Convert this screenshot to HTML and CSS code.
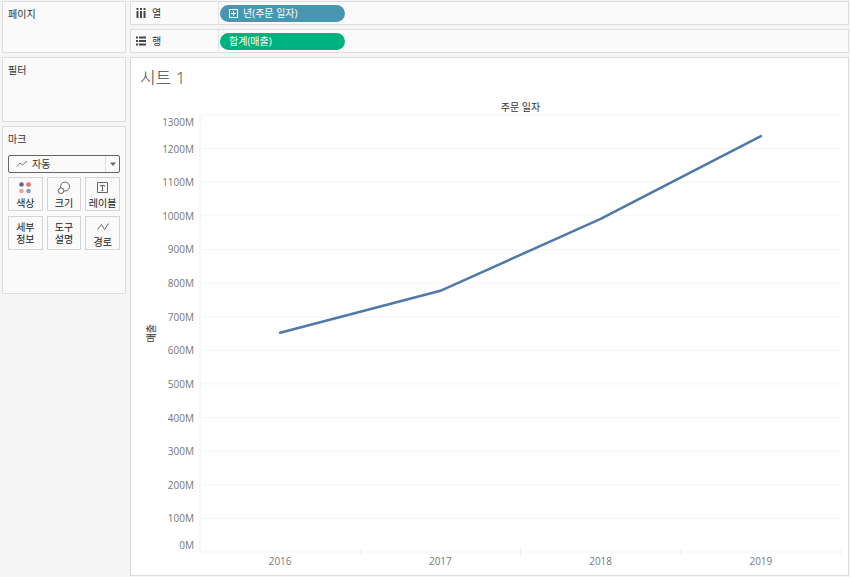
FILE: index.html
```html
<!DOCTYPE html>
<html lang="ko">
<head>
  <meta charset="UTF-8">
  <meta name="viewport" content="width=device-width, initial-scale=1.0">
  <title>시트 1</title>
  <link rel="stylesheet" href="styles.css">
</head>
<body>
  <div class="workspace">
    <!-- 왼쪽 카드 영역 -->
    <aside class="sidebar">
      <section class="card pages">
        <h2>페이지</h2>
      </section>
      <section class="card filters">
        <h2>필터</h2>
      </section>
      <section class="card marks">
        <h2><label for="mark-type">마크</label></h2>
        <div class="mark-type">
          <select id="mark-type">
            <option>자동</option>
          </select>
          <svg class="type-icon" width="12" height="8" viewBox="0 0 12 8"><path d="M1 6.500L4 3l2.500 2L11 1"/></svg>
          <svg class="arrow" width="15" height="16" viewBox="0 0 15 16"><path class="split" d="M.5 0v16"/><path class="tip" d="M5 6.500h6L8 10z"/></svg>
        </div>
        <div class="mark-buttons">
          <button type="button">
            <svg width="14" height="14" viewBox="0 0 14 14">
              <circle cx="3.500" cy="3.500" r="2.300" fill="#6b6287"/>
              <circle cx="10.500" cy="3.500" r="2.300" fill="#ed6b70"/>
              <circle cx="3.500" cy="10" r="2.300" fill="#f7a08c"/>
              <circle cx="10.500" cy="10" r="2.300" fill="#7d9fc8"/>
            </svg>
            색상
          </button>
          <button type="button">
            <svg class="line-icon" width="14" height="14" viewBox="0 0 14 14">
              <path d="M3.700 6.700A4.500 4.500 0 1 1 6.600 9.800"/>
              <circle cx="4" cy="9.700" r="2.800"/>
            </svg>
            크기
          </button>
          <button type="button">
            <svg class="line-icon" width="14" height="14" viewBox="0 0 14 14">
              <path d="M1.500 1.500h10v10h-10z"/>
              <path d="M4.500 5.500v-1h4v1M6.500 4.500v5M5.500 9.500h2"/>
            </svg>
            레이블
          </button>
          <button type="button">세부<br>정보</button>
          <button type="button">도구<br>설명</button>
          <button type="button">
            <svg class="line-icon" width="14" height="14" viewBox="0 0 14 14"><path d="M1.500 9.500L5.500 4.500l3 5L12.500 3.500"/></svg>
            경로
          </button>
        </div>
      </section>
    </aside>

    <main class="content">
      <!-- 열 / 행 선반 -->
      <div class="card shelf">
        <div class="shelf-name">
          <svg width="10" height="10" viewBox="0 0 10 10"><path d="M1.500 0v2M5 0v2M8.500 0v2M1.500 3v7M5 3v7M8.500 3v7"/></svg>
          열
        </div>
        <div class="pill dimension">
          <svg width="9" height="9" viewBox="0 0 9 9"><path d="M.5 .5h8v8h-8zM2 4.500h5M4.500 2v5"/></svg>
          년(주문 일자)
        </div>
      </div>
      <div class="card shelf">
        <div class="shelf-name">
          <svg width="10" height="10" viewBox="0 0 10 10"><path d="M0 1.500h2M0 5h2M0 8.500h2M3 1.500h7M3 5h7M3 8.500h7"/></svg>
          행
        </div>
        <div class="pill measure">합계(매출)</div>
      </div>

      <!-- 시트 -->
      <section class="card sheet">
        <h1>시트 1</h1>
        <div class="chart">
          <div class="x-title">주문 일자</div>
          <div class="y-title">매출</div>
          <div class="y-axis">
            <span>1300M</span>
            <span>1200M</span>
            <span>1100M</span>
            <span>1000M</span>
            <span>900M</span>
            <span>800M</span>
            <span>700M</span>
            <span>600M</span>
            <span>500M</span>
            <span>400M</span>
            <span>300M</span>
            <span>200M</span>
            <span>100M</span>
            <span>0M</span>
          </div>
          <!-- y: 0 = 1300M, 1300 = 0M -->
          <svg class="plot" viewBox="0 0 640 1300" preserveAspectRatio="none">
            <path class="grid" d="M0 0H640M0 100H640M0 200H640M0 300H640M0 400H640M0 500H640M0 600H640M0 700H640M0 800H640M0 900H640M0 1000H640M0 1100H640M0 1200H640M0 1300H640"/>
            <path class="axis" d="M0 0V1300M160 1290V1310M320 1290V1310M480 1290V1310M640 1290V1310"/>
            <polyline class="series" points="80,648 240,523 400,309 560,63"/>
          </svg>
          <div class="x-axis">
            <span>2016</span>
            <span>2017</span>
            <span>2018</span>
            <span>2019</span>
          </div>
        </div>
      </section>
    </main>
  </div>
</body>
</html>
```

FILE: styles.css
```css
* {
  box-sizing: border-box;
}
body {
  margin: 0;
  background: #f5f5f5;
  color: #333;
  font-family: "Open Sans", "Noto Sans CJK KR", sans-serif;
  font-size: 10px;
  line-height: 12px;
}
h1, h2 {
  margin: 0;
  font-weight: normal;
}
.workspace {
  display: flex;
  gap: 4px;
  min-height: 100vh;
  padding: 1px 1px 1px 2px;
}
.card {
  background: #fafafa;
  border: 1px solid #dcdcdc;
}

/* 사이드바 */
.sidebar {
  display: flex;
  flex-direction: column;
  flex: 0 0 124px;
  gap: 4px;
}
.sidebar .card {
  padding: 6px 5px;
}
.sidebar h2 {
  font-size: 10px;
  line-height: 12px;
}
.pages {
  min-height: 52px;
}
.filters {
  min-height: 65px;
}
.marks {
  min-height: 168px;
}
.mark-type {
  display: grid;
  align-items: center;
  margin-top: 10px;
}
.mark-type > * {
  grid-area: 1 / 1;
}
.mark-type select {
  appearance: none;
  width: 100%;
  height: 18px;
  padding: 0 16px 0 23px;
  border: 1px solid #666;
  border-radius: 2px;
  background: #fafafa;
  color: #333;
  font: inherit;
}
.mark-type svg {
  pointer-events: none;
  fill: none;
  stroke: #777;
}
.type-icon {
  margin-left: 8px;
}
.arrow {
  justify-self: end;
}
.mark-type .split {
  stroke: #ddd;
}
.mark-type .tip {
  fill: #666;
  stroke: none;
}
.mark-buttons {
  display: grid;
  grid-template-columns: repeat(3, 1fr);
  gap: 5px 4px;
  margin-top: 4px;
}
.mark-buttons button {
  display: flex;
  flex-direction: column;
  align-items: center;
  justify-content: center;
  height: 34px;
  padding: 0;
  border: 1px solid #d4d4d4;
  background: #fafafa;
  color: #222;
  font: inherit;
  white-space: nowrap;
}
.mark-buttons svg {
  margin-top: 2px;
  margin-bottom: 2px;
}
.line-icon {
  fill: none;
  stroke: #666;
}

/* 선반 */
.content {
  display: flex;
  flex: 1;
  flex-direction: column;
  gap: 4px;
  min-width: 0;
}
.shelf {
  display: flex;
  align-items: center;
  height: 24px;
}
.shelf-name {
  display: flex;
  align-items: center;
  align-self: stretch;
  gap: 6px;
  width: 88px;
  padding-left: 5px;
  border-right: 1px solid #e4e4e4;
}
.shelf-name svg {
  stroke: #444;
  stroke-width: 2;
}
.pill {
  display: flex;
  align-items: center;
  gap: 5px;
  width: 125px;
  height: 17px;
  margin-left: 1px;
  padding: 0 9px;
  border-radius: 9px;
  color: #fff;
}
.pill svg {
  fill: none;
  stroke: #fff;
}
.dimension {
  background: #4996b2;
}
.measure {
  background: #00b180;
}

/* 시트와 차트 */
.sheet {
  display: flex;
  flex: 1;
  flex-direction: column;
  padding: 10px 7px 5px 9px;
  background: #fff;
}
.sheet h1 {
  color: #444;
  font-size: 17px;
  font-weight: 300;
  line-height: 20px;
}
.chart {
  display: grid;
  flex: 1;
  grid-template-columns: 22px 38px 1fr;
  grid-template-rows: 14px 1fr 18px;
  margin-top: 13px;
  color: #777;
}
.x-title {
  grid-column: 3;
  color: #333;
  font-size: 10px;
  text-align: center;
}
.y-title {
  grid-row: 2;
  place-self: center;
  color: #333;
  font-size: 10px;
  writing-mode: vertical-rl;
  text-orientation: sideways;
  transform: rotate(180deg);
}
.y-axis {
  display: grid;
  grid-row: 2;
  grid-column: 2;
  grid-template-rows: 1fr repeat(12, 2fr) 1fr;
  align-items: center;
  padding-right: 6px;
  line-height: 14px;
  text-align: right;
}
.y-axis span:first-child {
  align-self: start;
}
.y-axis span:last-child {
  align-self: end;
}
/* the plot takes its height from the row, not from the viewBox */
.plot {
  grid-row: 2;
  grid-column: 3;
  width: 100%;
  height: 0;
  min-height: 100%;
  overflow: visible;
  fill: none;
}
.plot * {
  vector-effect: non-scaling-stroke;
}
.grid {
  stroke: #f5f5f5;
}
.axis {
  stroke: #eee;
}
.series {
  stroke: #5079a8;
  stroke-width: 2.5;
  stroke-linecap: round;
  stroke-linejoin: round;
}
.x-axis {
  display: grid;
  grid-row: 3;
  grid-column: 3;
  grid-template-columns: repeat(4, 1fr);
  align-items: center;
  text-align: center;
}
```
